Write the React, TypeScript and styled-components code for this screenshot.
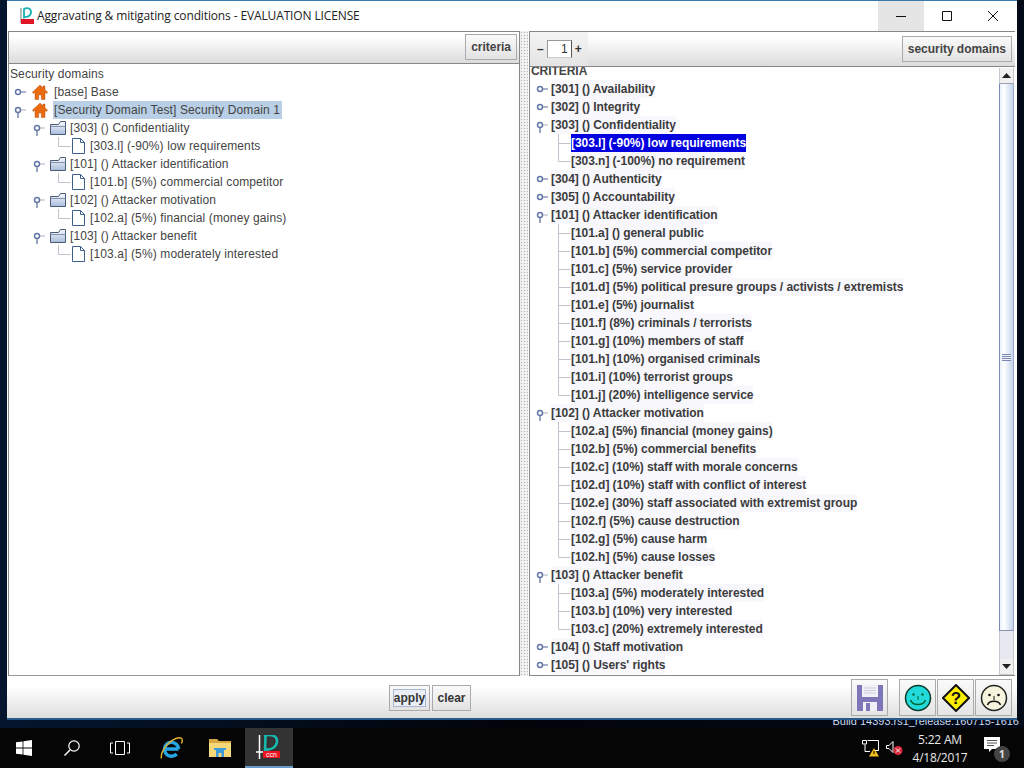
import React from "react";
import styled, { createGlobalStyle } from "styled-components";

type Row = { label: string; kind: "root" | "group" | "leaf"; selected?: boolean };

const leftRows: Row[] = [
  { label: "[base] Base", kind: "root" },
  { label: "[Security Domain Test] Security Domain 1", kind: "root", selected: true },
  { label: "[303] () Confidentiality", kind: "group" },
  { label: "[303.l] (-90%) low requirements", kind: "leaf" },
  { label: "[101] () Attacker identification", kind: "group" },
  { label: "[101.b] (5%) commercial competitor", kind: "leaf" },
  { label: "[102] () Attacker motivation", kind: "group" },
  { label: "[102.a] (5%) financial (money gains)", kind: "leaf" },
  { label: "[103] () Attacker benefit", kind: "group" },
  { label: "[103.a] (5%) moderately interested", kind: "leaf" },
];

// open = handle points down, leaf = connector line only
const rightRows: { label: string; open?: boolean; leaf?: boolean; selected?: boolean }[] = [
  { label: "[301] () Availability" },
  { label: "[302] () Integrity" },
  { label: "[303] () Confidentiality", open: true },
  { label: "[303.l] (-90%) low requirements", leaf: true, selected: true },
  { label: "[303.n] (-100%) no requirement", leaf: true },
  { label: "[304] () Authenticity" },
  { label: "[305] () Accountability" },
  { label: "[101] () Attacker identification", open: true },
  { label: "[101.a] () general public", leaf: true },
  { label: "[101.b] (5%) commercial competitor", leaf: true },
  { label: "[101.c] (5%) service provider", leaf: true },
  { label: "[101.d] (5%) political presure groups / activists / extremists", leaf: true },
  { label: "[101.e] (5%) journalist", leaf: true },
  { label: "[101.f] (8%) criminals / terrorists", leaf: true },
  { label: "[101.g] (10%) members of staff", leaf: true },
  { label: "[101.h] (10%) organised criminals", leaf: true },
  { label: "[101.i] (10%) terrorist groups", leaf: true },
  { label: "[101.j] (20%) intelligence service", leaf: true },
  { label: "[102] () Attacker motivation", open: true },
  { label: "[102.a] (5%) financial (money gains)", leaf: true },
  { label: "[102.b] (5%) commercial benefits", leaf: true },
  { label: "[102.c] (10%) staff with morale concerns", leaf: true },
  { label: "[102.d] (10%) staff with conflict of interest", leaf: true },
  { label: "[102.e] (30%) staff associated with extremist group", leaf: true },
  { label: "[102.f] (5%) cause destruction", leaf: true },
  { label: "[102.g] (5%) cause harm", leaf: true },
  { label: "[102.h] (5%) cause losses", leaf: true },
  { label: "[103] () Attacker benefit", open: true },
  { label: "[103.a] (5%) moderately interested", leaf: true },
  { label: "[103.b] (10%) very interested", leaf: true },
  { label: "[103.c] (20%) extremely interested", leaf: true },
  { label: "[104] () Staff motivation" },
  { label: "[105] () Users' rights" },
];

const Handle = ({ open }: { open?: boolean }) => (
  <svg width="13" height="18" viewBox="0 0 13 18">
    {open && <path d="M5 11v6" stroke="#6c7fa8" strokeWidth="1.4" />}
    <path d="M8 9h5" stroke={open ? "#b8bec9" : "#6c7fa8"} strokeWidth="1.2" />
    <circle cx="5" cy="9" r="2.500" fill="#fff" stroke="#6478a8" strokeWidth="1.500" />
  </svg>
);

const Elbow = ({ more }: { more?: boolean }) => (
  <svg width="13" height="18" viewBox="0 0 13 18">
    <path d={more ? "M0.500 0v18M0.500 9.500h12" : "M0.500 0v9.500h12"} stroke="#c0c4cc" strokeWidth="1" fill="none" />
  </svg>
);

const HomeIcon = () => (
  <svg width="16" height="16" viewBox="0 0 16 16">
    <path d="M8 1 0.300 8.300 1.500 9.500 3 8.200V15.500h3.700v-4.500h2.600v4.500H13V8.200l1.500 1.300 1.200-1.200L13 5.700V2h-2v1.800L8 1z" fill="#ea6a10" stroke="#a84a08" strokeWidth=".4" />
  </svg>
);

const FolderIcon = () => (
  <svg width="16" height="14" viewBox="0 0 16 14">
    <defs>
      <linearGradient id="fld" x1="0" y1="0" x2="0" y2="1">
        <stop offset="0" stopColor="#f8f9fc" />
        <stop offset="1" stopColor="#a8bcdc" />
      </linearGradient>
    </defs>
    <path d="M.5 3.500h8l2-3h5v13H.5z" fill="url(#fld)" stroke="#4a5a74" strokeWidth="1" />
    <path d="M.5 5.500h15" stroke="#8896ac" strokeWidth="1" />
  </svg>
);

const DocIcon = () => (
  <svg width="13" height="16" viewBox="0 0 13 16">
    <path d="M.5.500h8l4 4v11H.5z" fill="#fff" stroke="#3f5f8c" strokeWidth="1" />
    <path d="M8.500.500v4h4" fill="none" stroke="#3f5f8c" strokeWidth="1" />
  </svg>
);

const ArrowUp = () => (
  <svg width="9" height="5" viewBox="0 0 9 5"><path d="M4.500 0l4.500 5H0z" fill="#222" /></svg>
);

const ArrowDown = () => (
  <svg width="9" height="5" viewBox="0 0 9 5"><path d="M0 0h9L4.500 5z" fill="#222" /></svg>
);

const AppLogo = () => (
  <svg width="26" height="24" viewBox="0 0 26 24">
    <path d="M8 1c3-1.500 13-2 13 5 0 6-7 10-12 8" fill="none" stroke="#16b8ae" strokeWidth="2.600" />
    <path d="M9.500 1l-.5 15" stroke="#16b8ae" strokeWidth="2.600" />
    <path d="M3.500 0v24" stroke="#fff" strokeWidth="1.500" />
    <path d="M0 17h7" stroke="#fff" strokeWidth="1.500" />
    <rect x="7" y="16" width="17" height="7" fill="#ee1122" />
    <text x="15.500" y="22" fontSize="7" fill="#fff" textAnchor="middle" fontFamily="Liberation Sans, sans-serif">ccn</text>
  </svg>
);

const TitleLogo = () => (
  <svg width="16" height="18" viewBox="0 0 16 18">
    <path d="M2 1v15" stroke="#777" strokeWidth="1" />
    <path d="M5 2c2-1.500 7-1.500 7 3s-5 5.500-7 4.500M5 1.500v10" fill="none" stroke="#18b0b0" strokeWidth="1.800" />
    <rect x="2" y="12" width="13" height="5" fill="#e01525" />
  </svg>
);

const SaveIcon = () => (
  <svg width="28" height="28" viewBox="0 0 28 28">
    <path d="M1 1h26v26H1z" fill="#7d77ba" />
    <rect x="6" y="1" width="16" height="12" fill="#f0f0f6" />
    <path d="M8 4h12M8 6.500h12M8 9h12" stroke="#ccccdc" strokeWidth="1" />
    <rect x="7" y="18" width="14" height="9" fill="#f0f0f6" />
    <rect x="10" y="19" width="4" height="8" fill="#7d77ba" />
  </svg>
);

const SmileIcon = () => (
  <svg width="28" height="28" viewBox="0 0 28 28">
    <circle cx="14" cy="14" r="12.500" fill="#22dada" stroke="#0a3a2a" strokeWidth="1.500" />
    <circle cx="9.500" cy="10.500" r="1.200" fill="#063" />
    <circle cx="18.500" cy="10.500" r="1.200" fill="#063" />
    <path d="M14 12v4" stroke="#063" strokeWidth="1" />
    <path d="M6.500 16c2 6 13 6 15 0" fill="none" stroke="#063" strokeWidth="1.500" />
  </svg>
);

const HelpIcon = () => (
  <svg width="28" height="28" viewBox="0 0 28 28">
    <path d="M14 1l13 13-13 13L1 14z" fill="#ffee00" stroke="#111" strokeWidth="2" />
    <text x="14" y="20" fontSize="17" fontWeight="700" textAnchor="middle" fill="#111" fontFamily="Liberation Sans, sans-serif">?</text>
  </svg>
);

const SadIcon = () => (
  <svg width="28" height="28" viewBox="0 0 28 28">
    <circle cx="14" cy="14" r="12.500" fill="#f6f4dc" stroke="#222" strokeWidth="1.500" />
    <circle cx="9.500" cy="11" r="1.300" fill="#111" />
    <circle cx="18.500" cy="11" r="1.300" fill="#111" />
    <path d="M14 12v4" stroke="#111" strokeWidth="1" />
    <path d="M7.500 21c2-5 11-5 13 0" fill="none" stroke="#111" strokeWidth="1.500" />
  </svg>
);

const WindowsIcon = () => (
  <svg width="16" height="16" viewBox="0 0 16 16">
    <path d="M0 2.300 6.600 1.400v6.200H0zM7.400 1.300 16 0v7.600H7.400zM0 8.400h6.600v6.200L0 13.700zM7.400 8.400H16V16l-8.600-1.200z" fill="#fff" />
  </svg>
);

const SearchIcon = () => (
  <svg width="18" height="18" viewBox="0 0 18 18">
    <circle cx="11" cy="7" r="5.200" fill="none" stroke="#fff" strokeWidth="1.200" />
    <path d="M7 11l-5.500 5.500" stroke="#fff" strokeWidth="1.400" />
  </svg>
);

const TaskViewIcon = () => (
  <svg width="20" height="14" viewBox="0 0 20 14">
    <path d="M5.500.500h9v13h-9z" fill="none" stroke="#fff" />
    <path d="M3 2H.5v10H3M17 2h2.500v10H17" fill="none" stroke="#fff" />
  </svg>
);

const IeIcon = () => (
  <svg width="24" height="24" viewBox="0 0 24 24">
    <path d="M6 13h12.500M18.500 13a7 7 0 1 0-1.800 5" fill="none" stroke="#26a4e4" strokeWidth="3.400" />
    <path d="M1.500 22.500C0 16 8 5.500 16 2.500c5.500-2 7.500 .5 5.500 5" fill="none" stroke="#e2b030" strokeWidth="1.400" />
  </svg>
);

const ExplorerIcon = () => (
  <svg width="22" height="18" viewBox="0 0 22 18">
    <path d="M0 0h8l2 2h12v4H0z" fill="#d8a840" />
    <path d="M0 4h22v14H0z" fill="#f6d878" />
    <path d="M5 9h12v2h-2v7h-8v-7H5z" fill="#3d9cd8" />
    <rect x="9.500" y="14" width="3" height="4" fill="#f6d878" />
  </svg>
);

const NetworkIcon = () => (
  <svg width="18" height="18" viewBox="0 0 18 18">
    <path d="M.5 1.500h4v3.500h-4z" fill="none" stroke="#fff" />
    <path d="M5.500 1.500h11v10h-5" fill="none" stroke="#fff" />
    <path d="M3 5.500v7h5" fill="none" stroke="#fff" />
    <path d="M12 9l5 8.500H7z" fill="#f0c020" />
    <path d="M12 12v3" stroke="#000" />
  </svg>
);

const SpeakerIcon = () => (
  <svg width="18" height="16" viewBox="0 0 18 16">
    <path d="M.5 5.500h2.500l4-4v11l-4-4H.5z" fill="none" stroke="#fff" />
    <circle cx="12" cy="10.500" r="4.500" fill="#d8283c" />
    <path d="M10 8.500l4 4m0-4l-4 4" stroke="#fff" strokeWidth="1" />
  </svg>
);

const NotifyIcon = () => (
  <svg width="24" height="24" viewBox="0 0 24 24">
    <path d="M0 1h16v12H8l-3 3v-3H0z" fill="#fff" />
    <path d="M3 4.500h10M3 7h10M3 9.500h7" stroke="#555" />
  </svg>
);

export default function App() {
  return (
    <>
      <GlobalStyle />
      <Desktop>
        <Window>
          <TitleBar>
            <TitleLogo />
            <TitleText>Aggravating &amp; mitigating conditions - EVALUATION LICENSE</TitleText>
            <Caption $hover>
              <svg width="12" height="12" viewBox="0 0 12 12"><path d="M1 6.500h10" stroke="#111" /></svg>
            </Caption>
            <Caption>
              <svg width="12" height="12" viewBox="0 0 12 12"><path d="M1.500 1.500h9v9h-9z" fill="none" stroke="#111" /></svg>
            </Caption>
            <Caption>
              <svg width="12" height="12" viewBox="0 0 12 12"><path d="M1 1l10 10M11 1 1 11" stroke="#111" /></svg>
            </Caption>
          </TitleBar>
          <Panes>
            <LeftPane>
              <LeftToolbar>
                <ToolButton>criteria</ToolButton>
              </LeftToolbar>
              <LeftTree>
                <TreeTitle>Security domains</TreeTitle>
                {leftRows.map((row) => (
                  <LeftRow key={row.label} $kind={row.kind}>
                    {row.kind === "leaf" ? <Elbow /> : <Handle open={row.selected || row.kind === "group"} />}
                    <LeftIcon $kind={row.kind}>
                      {row.kind === "root" && <HomeIcon />}
                      {row.kind === "group" && <FolderIcon />}
                      {row.kind === "leaf" && <DocIcon />}
                    </LeftIcon>
                    <LeftLabel $selected={row.selected}>{row.label}</LeftLabel>
                  </LeftRow>
                ))}
              </LeftTree>
            </LeftPane>
            <Splitter />
            <RightPane>
              <RightToolbar>
                <Stepper>
                  <span>–</span>
                  <StepInput>1</StepInput>
                  <span>+</span>
                </Stepper>
                <ToolButton>security domains</ToolButton>
              </RightToolbar>
              <RightBody>
                <RightTree>
                  <CriteriaTitle>CRITERIA</CriteriaTitle>
                  {rightRows.map((row, i) => (
                    <RightRow key={row.label} $leaf={row.leaf}>
                      {row.leaf ? <Elbow more={rightRows[i + 1]?.leaf} /> : <Handle open={row.open} />}
                      <RightLabel $selected={row.selected}>{row.label}</RightLabel>
                    </RightRow>
                  ))}
                </RightTree>
                <ScrollBar>
                  <ScrollEnd $top><ArrowUp /></ScrollEnd>
                  <ScrollThumb><Grip /></ScrollThumb>
                  <ScrollTrack />
                  <ScrollEnd><ArrowDown /></ScrollEnd>
                </ScrollBar>
              </RightBody>
            </RightPane>
          </Panes>
          <BottomBar>
            <ActionGroup>
              <ActionButton $width={41} $focused>
                <span>apply</span>
              </ActionButton>
              <ActionButton $width={39}>clear</ActionButton>
            </ActionGroup>
            <IconGroup>
              <IconButton $gap><SaveIcon /></IconButton>
              <IconButton><SmileIcon /></IconButton>
              <IconButton><HelpIcon /></IconButton>
              <IconButton><SadIcon /></IconButton>
            </IconGroup>
          </BottomBar>
        </Window>
        <BuildStrip>
          <BuildText>Build 14393.rs1_release.160715-1616</BuildText>
        </BuildStrip>
        <Taskbar>
          <TaskCell><WindowsIcon /></TaskCell>
          <TaskCell><SearchIcon /></TaskCell>
          <TaskCell><TaskViewIcon /></TaskCell>
          <TaskCell $shift={4}><IeIcon /></TaskCell>
          <TaskCell><ExplorerIcon /></TaskCell>
          <TaskCell $shift={1} $active><AppLogo /></TaskCell>
          <Tray>
            <NetworkIcon />
            <SpeakerIcon />
            <Clock>
              <span>5:22 AM</span>
              <span>4/18/2017</span>
            </Clock>
            <Notify>
              <NotifyIcon />
              <NotifyBadge>1</NotifyBadge>
            </Notify>
          </Tray>
        </Taskbar>
      </Desktop>
    </>
  );
}

const GlobalStyle = createGlobalStyle`
  html, body {
    margin: 0;
    padding: 0;
    overflow: hidden;
  }
  body {
    font-family: "Liberation Sans", Arial, sans-serif;
    font-size: 12px;
    color: #333;
  }
  svg {
    display: block;
    flex: none;
  }
`;

const Desktop = styled.div`
  width: 1024px;
  height: 768px;
  display: flex;
  flex-direction: column;
  background: linear-gradient(90deg, #04162e 0, #02040a 50%, #020a18 100%);
`;

const Window = styled.div`
  height: 720px;
  margin: 0 7px;
  display: flex;
  flex-direction: column;
  background: #fff;
  border-top: 1px solid #3a78a8;
  border-bottom: 2px solid #2a5a88;
  box-sizing: border-box;
`;

const TitleBar = styled.div`
  height: 30px;
  display: flex;
  align-items: center;
  padding: 0 1px 0 12px;
  flex: none;
`;

const TitleText = styled.div`
  flex: 1;
  margin-left: 2px;
  padding-bottom: 2px;
  font-family: "Open Sans", sans-serif;
  font-size: 12px;
  letter-spacing: -0.13px;
  color: #222;
`;

const Caption = styled.div<{ $hover?: boolean }>`
  width: 46px;
  height: 30px;
  display: flex;
  align-items: center;
  justify-content: center;
  background: ${(p) => (p.$hover ? "#e5e5e5" : "transparent")};
`;

const Panes = styled.div`
  flex: 1;
  display: flex;
  padding-left: 1px;
  min-height: 0;
`;

const LeftPane = styled.div`
  width: 512px;
  display: flex;
  flex-direction: column;
  border: 1px solid #888;
  border-bottom-color: #999;
  box-sizing: border-box;
`;

const LeftToolbar = styled.div`
  height: 32px;
  flex: none;
  display: flex;
  align-items: flex-start;
  justify-content: flex-end;
  padding: 2px 2px 0 0;
  box-sizing: border-box;
  background: linear-gradient(180deg, #fff 0, #fff 15%, #dcdcdc 100%);
  border-bottom: 1px solid #888;
`;

const ToolButton = styled.div`
  height: 26px;
  padding: 0 5px;
  display: flex;
  align-items: center;
  font-weight: 700;
  letter-spacing: -0.03px;
  color: #444;
  background: linear-gradient(180deg, #fafafa 0, #e2e2e2 100%);
  border: 1px solid #aaa;
  box-sizing: border-box;
`;

const LeftTree = styled.div`
  flex: 1;
  background: #fff;
  padding: 1px 0 0 1px;
  letter-spacing: 0.12px;
`;

const TreeTitle = styled.div`
  height: 18px;
  line-height: 18px;
  color: #444;
`;

const LeftRow = styled.div<{ $kind: Row["kind"] }>`
  height: 18px;
  display: flex;
  align-items: center;
  padding-left: ${(p) => (p.$kind === "root" ? 3 : p.$kind === "group" ? 22 : 48)}px;
  color: #444;
`;

const LeftIcon = styled.div<{ $kind: Row["kind"] }>`
  display: flex;
  align-items: center;
  margin-left: ${(p) => (p.$kind === "root" ? 6 : p.$kind === "group" ? 5 : 1)}px;
  margin-right: ${(p) => (p.$kind === "root" ? 5 : p.$kind === "group" ? 3 : 4)}px;
`;

const LeftLabel = styled.span<{ $selected?: boolean }>`
  height: 18px;
  line-height: 18px;
  padding: 0 2px 0 1px;
  background: ${(p) => (p.$selected ? "#b8cfe5" : "transparent")};
`;

const Splitter = styled.div`
  width: 8px;
  margin-right: 1px;
  background-color: #f0f0f0;
  background-image: radial-gradient(#b0b0b0 0.7px, transparent 0.8px);
  background-size: 3px 3px;
  flex: none;
`;

const RightPane = styled.div`
  flex: 1;
  min-width: 0;
  display: flex;
  flex-direction: column;
  border: 1px solid #888;
  border-right: none;
  box-sizing: border-box;
  margin-right: 2px;
`;

const RightToolbar = styled.div`
  height: 35px;
  flex: none;
  display: flex;
  align-items: center;
  justify-content: space-between;
  padding: 0 3px 0 0;
  box-sizing: border-box;
  background: linear-gradient(180deg, #fff 0, #fff 15%, #dcdcdc 100%);
  border-bottom: 1px solid #888;
`;

const Stepper = styled.div`
  width: 58px;
  height: 100%;
  display: flex;
  align-items: center;
  gap: 3px;
  padding-left: 7px;
  box-sizing: border-box;
  font-weight: 700;
  color: #333;
  background: linear-gradient(180deg, #f4f4f4 0, #e4e4e4 100%);
`;

const StepInput = styled.div`
  width: 25px;
  height: 18px;
  line-height: 17px;
  text-align: right;
  padding-right: 3px;
  box-sizing: border-box;
  font-weight: 400;
  background: #fff;
  border: 1px solid #999;
  border-right-color: #555;
  border-bottom-color: #ccc;
`;

const RightBody = styled.div`
  flex: 1;
  min-height: 0;
  display: flex;
  padding-right: 1px;
  background: #fff;
`;

const RightTree = styled.div`
  flex: 1;
  min-width: 0;
  overflow: hidden;
  letter-spacing: -0.05px;
`;

const CriteriaTitle = styled.div`
  height: 13px;
  line-height: 8px;
  font-weight: 700;
  color: #444;
  padding-left: 1px;
`;

const RightRow = styled.div<{ $leaf?: boolean }>`
  height: 18px;
  display: flex;
  align-items: center;
  gap: ${(p) => (p.$leaf ? 0 : 3)}px;
  padding-left: ${(p) => (p.$leaf ? 28 : 5)}px;
  color: #3c3c3c;
  font-weight: 700;
`;

const RightLabel = styled.span<{ $selected?: boolean }>`
  height: 18px;
  line-height: 18px;
  background: ${(p) => (p.$selected ? "#0000e0" : "#f7f7fc")};
  color: ${(p) => (p.$selected ? "#fff" : "inherit")};
`;

const ScrollBar = styled.div`
  width: 15px;
  margin-top: 1px;
  flex: none;
  display: flex;
  flex-direction: column;
`;

const ScrollEnd = styled.div<{ $top?: boolean }>`
  height: 16px;
  flex: none;
  display: flex;
  align-items: center;
  justify-content: center;
  background: #f0f0f0;
  border-left: 1px solid #c4c8d0;
  border-right: 1px solid #c4c8d0;
  border-bottom: 1px solid ${(p) => (p.$top ? "#9aa0ac" : "#c4c8d0")};
  box-sizing: border-box;
`;

const ScrollThumb = styled.div`
  flex: 1;
  display: flex;
  align-items: center;
  justify-content: center;
  background: linear-gradient(90deg, #e8f0fa 0, #fff 30%, #c4d4ec 100%);
  border-left: 1px solid #7a8ab0;
  border-right: 1px solid #9aaac8;
  border-bottom: 1px solid #8a94ac;
`;

const ScrollTrack = styled.div`
  height: 28px;
  flex: none;
  background: #e8e8f0;
  border-left: 1px solid #c4c8d0;
  border-right: 1px solid #c4c8d0;
`;

const Grip = styled.div`
  width: 9px;
  height: 7px;
  background: repeating-linear-gradient(180deg, #7a88b0 0 1px, #eef2fa 1px 2px);
`;

const BottomBar = styled.div`
  height: 42px;
  flex: none;
  display: flex;
  align-items: center;
  justify-content: space-between;
  padding: 1px 4px 0 382px;
  box-sizing: border-box;
  background: linear-gradient(180deg, #fff 0, #fff 25%, #dedede 100%);
`;

const ActionGroup = styled.div`
  display: flex;
  gap: 2px;
`;

const ActionButton = styled.div<{ $width: number; $focused?: boolean }>`
  width: ${(p) => p.$width}px;
  height: 26px;
  display: flex;
  align-items: center;
  justify-content: center;
  font-weight: 700;
  color: #333;
  background: linear-gradient(180deg, #fafafa 0, #e2e2e2 100%);
  border: 1px solid #aaa;
  box-sizing: border-box;
  span {
    padding: 1px 0;
    outline: 1px solid ${(p) => (p.$focused ? "#a8b8d0" : "transparent")};
    background: ${(p) => (p.$focused ? "#eaeef6" : "transparent")};
  }
`;

const IconGroup = styled.div`
  display: flex;
`;

const IconButton = styled.div<{ $gap?: boolean }>`
  width: 37px;
  height: 37px;
  display: flex;
  align-items: center;
  justify-content: center;
  margin-right: ${(p) => (p.$gap ? 11 : 1)}px;
  background: linear-gradient(180deg, #fafafa 0, #e4e4e4 100%);
  border: 1px solid #aaa;
  box-sizing: border-box;
`;

const BuildStrip = styled.div`
  height: 8px;
  overflow: hidden;
  display: flex;
  justify-content: flex-end;
  padding-right: 5px;
`;

const BuildText = styled.div`
  font-size: 11px;
  line-height: 1;
  margin-top: -4px;
  color: #c8d8f0;
  white-space: nowrap;
`;

const Taskbar = styled.div`
  height: 40px;
  display: flex;
  background: #050505;
  font-family: "Open Sans", sans-serif;
`;

const TaskCell = styled.div<{ $active?: boolean; $shift?: number }>`
  width: 48px;
  margin-left: ${(p) => p.$shift ?? 0}px;
  display: flex;
  align-items: center;
  justify-content: center;
  box-sizing: border-box;
  background: ${(p) => (p.$active ? "#333" : "transparent")};
  border-bottom: ${(p) => (p.$active ? "2px solid #6a9ac8" : "none")};
`;

const Tray = styled.div`
  margin-left: auto;
  display: flex;
  align-items: center;
  gap: 6px;
  padding-right: 16px;
`;

const Clock = styled.div`
  width: 60px;
  display: flex;
  flex-direction: column;
  align-items: center;
  gap: 3px;
  margin-right: 8px;
  font-size: 12px;
  line-height: 15px;
  letter-spacing: -0.2px;
  color: #e8e8e8;
`;

const Notify = styled.div`
  position: relative;
`;

const NotifyBadge = styled.div`
  position: absolute;
  right: -2px;
  bottom: -2px;
  width: 16px;
  height: 16px;
  line-height: 16px;
  border-radius: 50%;
  text-align: center;
  font-size: 11px;
  font-weight: 700;
  color: #ddd;
  background: #444;
`;
